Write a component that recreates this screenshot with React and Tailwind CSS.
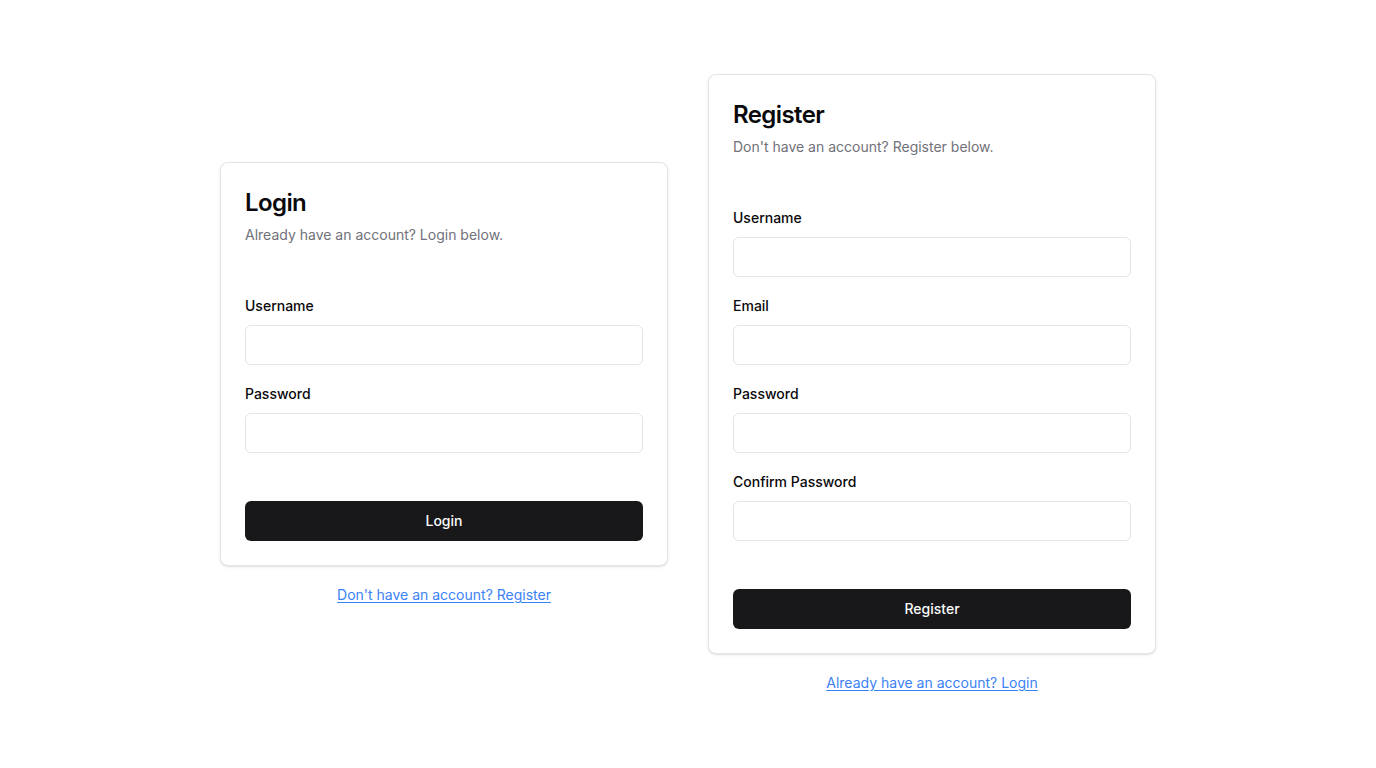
import React from "react";

function Field({ label, type = "text" }) {
  return (
    <div className="flex flex-col">
      <label className="text-sm leading-5 font-medium text-[#09090b]">{label}</label>
      <input
        type={type}
        className="mt-[9px] h-10 w-full rounded-md border border-[#e4e4e7] bg-white px-3 text-sm outline-none"
      />
    </div>
  );
}

function AuthCard({ title, description, fields, button, link }) {
  return (
    <div className="flex w-[448px] flex-col items-center pb-px">
      <div className="w-full rounded-lg border border-[#e4e4e7] bg-white p-6 shadow-sm">
        <h2 className="text-2xl leading-8 font-semibold tracking-tight text-[#09090b]">{title}</h2>
        <p className="mt-1.5 text-sm leading-5 text-[#71717a]">{description}</p>
        <div className="mt-[51px] flex flex-col gap-[19px]">
          {fields.map((f) => (
            <Field key={f.label} label={f.label} type={f.type} />
          ))}
        </div>
        <button className="mt-12 h-10 w-full rounded-md bg-[#18181b] text-sm font-medium text-[#fafafa]">
          {button}
        </button>
      </div>
      <a href="#" className="mt-[19px] text-sm leading-5 text-[#3b82f6] underline underline-offset-2">
        {link}
      </a>
    </div>
  );
}

export default function App() {
  return (
    <div
      className="flex min-h-screen items-center justify-center gap-10 bg-white"
      style={{ fontFamily: "Inter, 'Noto Sans', sans-serif" }}
    >
      <AuthCard
        title="Login"
        description="Already have an account? Login below."
        fields={[
          { label: "Username" },
          { label: "Password", type: "password" },
        ]}
        button="Login"
        link="Don't have an account? Register"
      />
      <AuthCard
        title="Register"
        description="Don't have an account? Register below."
        fields={[
          { label: "Username" },
          { label: "Email", type: "email" },
          { label: "Password", type: "password" },
          { label: "Confirm Password", type: "password" },
        ]}
        button="Register"
        link="Already have an account? Login"
      />
    </div>
  );
}
